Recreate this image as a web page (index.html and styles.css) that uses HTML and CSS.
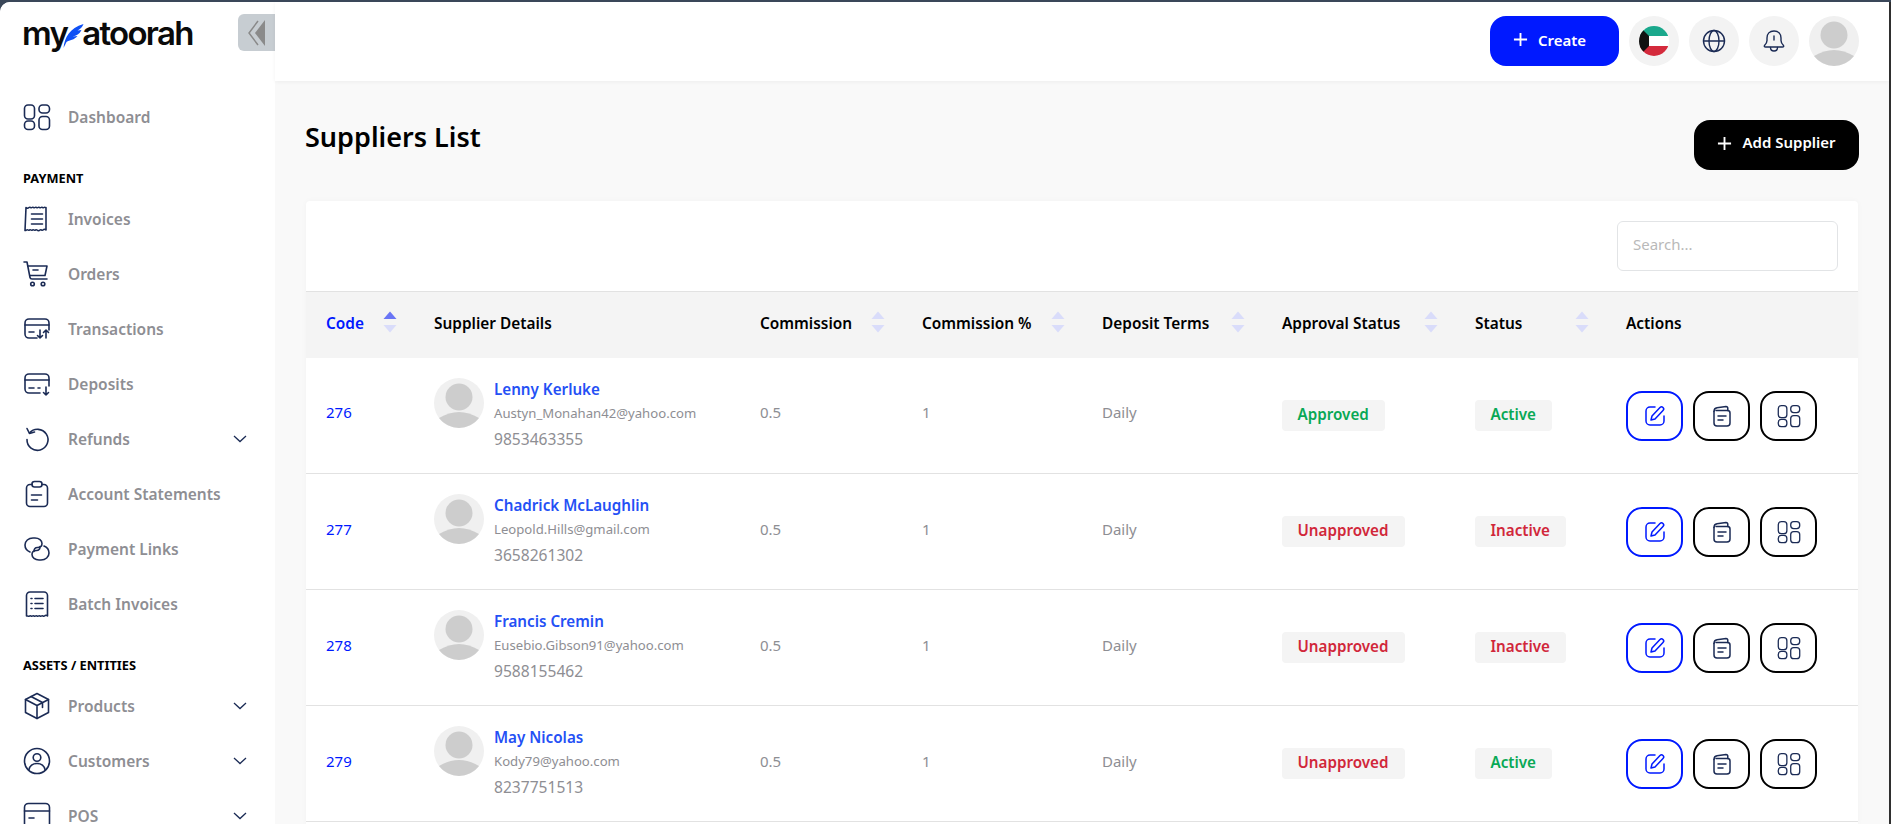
FILE: index.html
```html
<!DOCTYPE html>
<html lang="en">
<head>
<meta charset="utf-8">
<title>Suppliers List</title>
<link rel="stylesheet" href="styles.css">
</head>
<body>
<svg class="defs" width="0" height="0" aria-hidden="true">
  <symbol id="i-grid" viewBox="0 0 28 28"><rect x="1.500" y="2" width="10" height="14" rx="3.500"/><rect x="16" y="2" width="10.500" height="8" rx="3.500"/><rect x="1.500" y="18" width="10" height="8.500" rx="3.500"/><rect x="16" y="13.500" width="10.500" height="13" rx="3.500"/></symbol>
  <symbol id="i-chev" viewBox="0 0 14 8"><path d="M1 1l6 5.500L13 1"/></symbol>
  <symbol id="i-plus" viewBox="0 0 16 16"><path d="M8 1v14M1 8h14"/></symbol>
  <symbol id="i-sort" viewBox="0 0 14 22"><path class="up" d="M7 .5l6.500 7.500H.5z"/><path class="dn" d="M.5 14h13L7 21.500z"/></symbol>
  <symbol id="i-avatar" viewBox="0 0 50 50"><circle cx="25" cy="25" r="25" fill="#f0f0f0"/><circle cx="25" cy="19" r="13.500" fill="#cdcdcd"/><path d="M5 40Q25 28 45 40A25 25 0 0 1 5 40z" fill="#cdcdcd"/></symbol>
  <symbol id="i-edit" viewBox="0 0 24 24"><path d="M12 3H7a4 4 0 0 0-4 4v10a4 4 0 0 0 4 4h10a4 4 0 0 0 4-4v-5"/><path d="M8 16l1-4 8-8.500a2 2 0 0 1 3 3l-8 8.500z"/></symbol>
  <symbol id="i-note" viewBox="0 0 24 24"><path d="M4 7.500V19a3 3 0 0 0 3 3h10a3 3 0 0 0 3-3V9a2.500 2.500 0 0 0-2.500-2.500H6"/><path d="M4 7.500C4 5 5.500 4 7 3.800L16 2.500c1.200 0 1.800.8 1.800 2v2"/><path d="M8 12h8M8 16h5"/></symbol>
</svg>

<div class="app">
  <aside class="sidebar">
    <div class="brand">
      <div class="logo"><span>my</span><svg class="quill" viewBox="0 0 20 24"><path d="M0 24C1 14 6 4 20 0c-1 3-3 5-6 6.500L18 6c-2 4-5 6-9 6.500l5-.5c-3 4-8 4-11 6-1 2-2 4-3 6z"/></svg><span>atoorah</span></div>
      <button class="collapse" type="button" aria-label="Collapse"><svg viewBox="0 0 20 28"><path class="cline" d="M11 2L2 14l9 12"/><path class="cfill" d="M18 1v26L8 14z"/></svg></button>
    </div>
    <nav class="nav">
      <a class="item"><svg class="ico"><use href="#i-grid"/></svg><span>Dashboard</span></a>
      <h4 class="section">PAYMENT</h4>
      <a class="item"><svg class="ico" viewBox="0 0 28 28"><path d="M3 2.500c1 1 2 1 3 0s2 1 3 0 2 1 3 0 2 1 3 0 2 1 3 0 2 1 3 0 2 1 2 0V25c-1-1-2-1-3 0s-2-1-3 0-2 1-3 0-2 1-3 0-2 1-3 0-2 1-3 0-2 1-3 .5z"/><path d="M8.500 9h11M8.500 14h11M8.500 19h11"/></svg><span>Invoices</span></a>
      <a class="item"><svg class="ico" viewBox="0 0 28 28"><path d="M1 2h3l3 15.500c.2 1 .8 1.500 2 1.500h15"/><path d="M5 6h19l-2 9.500H7"/><path d="M10 10h5"/><circle cx="9.500" cy="24" r="1.800"/><circle cx="20" cy="24" r="1.800"/></svg><span>Orders</span></a>
      <a class="item"><svg class="ico" viewBox="0 0 28 28"><path d="M14 23H6a4 4 0 0 1-4-4V8a4 4 0 0 1 4-4h16a4 4 0 0 1 4 4v7"/><path d="M2 10h24M6 17h5"/><path d="M17 15v8m-2.500-2.500L17 23l2.500-2.500M23 23v-8m-2.500 2.500L23 15l2.500 2.500"/></svg><span>Transactions</span></a>
      <a class="item"><svg class="ico" viewBox="0 0 28 28"><path d="M17 23H6a4 4 0 0 1-4-4V8a4 4 0 0 1 4-4h16a4 4 0 0 1 4 4v8"/><path d="M2 10h24M6 18h5M15 18h2"/><path d="M23 17v8m-2.500-2.500L23 25l2.500-2.500"/></svg><span>Deposits</span></a>
      <a class="item"><svg class="ico" viewBox="0 0 28 28"><path d="M6.500 8A10.500 10.500 0 1 1 4 14.500"/><path d="M4 3.500l2.500 5 5-1.500"/></svg><span>Refunds</span><svg class="chev"><use href="#i-chev"/></svg></a>
      <a class="item"><svg class="ico" viewBox="0 0 28 28"><path d="M9 4.500H7a3.500 3.500 0 0 0-3.500 3.500v15A3.500 3.500 0 0 0 7 26.500h14a3.500 3.500 0 0 0 3.500-3.500V8A3.500 3.500 0 0 0 21 4.500h-2"/><rect x="9" y="1.500" width="10" height="5.500" rx="2.500"/><path d="M8.500 15h10M8.500 20h6"/></svg><span>Account Statements</span></a>
      <a class="item"><svg class="ico" viewBox="0 0 28 28"><path d="M7 17C3.500 15.500 2 13 2 10c0-4 3.500-7 8-7h2c4 0 7 2.500 7 5.500 0 2.500-2 4-4.500 4S11 14 11 16.500"/><path d="M21 11c3.500 1.500 5 4 5 7 0 4-3.500 7-8 7h-2c-4 0-7-2.500-7-5.500 0-2.500 2-4 4.500-4s3.500-1.500 3.500-4"/></svg><span>Payment Links</span></a>
      <a class="item"><svg class="ico" viewBox="0 0 28 28"><path d="M3.500 5.500A3.500 3.500 0 0 1 7 2h14a3.500 3.500 0 0 1 3.500 3.500V26c-1-1-2-1-3 0s-2-1-3 0-2-1-3 0-2-1-3 0-2-1-3 0-2-1-3 0-2-.5-3 0z"/><path d="M12 8.500h8M12 13.500h8M12 18.500h8M8 8.500h1M8 13.500h1M8 18.500h1"/></svg><span>Batch Invoices</span></a>
      <h4 class="section">ASSETS / ENTITIES</h4>
      <a class="item"><svg class="ico" viewBox="0 0 28 28"><path d="M14 1.500L25.500 7.500V20.500L14 26.500 2.500 20.500V7.500z"/><path d="M2.500 7.500L14 13.500 25.500 7.500M14 13.500v13M8 4.500l11.500 6v5"/></svg><span>Products</span><svg class="chev"><use href="#i-chev"/></svg></a>
      <a class="item"><svg class="ico" viewBox="0 0 28 28"><circle cx="14" cy="14" r="12.500"/><circle cx="14" cy="10.500" r="3.800"/><path d="M5.800 23c1-4.500 4-6.500 8.200-6.500s7.200 2 8.200 6.500"/></svg><span>Customers</span><svg class="chev"><use href="#i-chev"/></svg></a>
      <a class="item"><svg class="ico" viewBox="0 0 28 28"><rect x="1.500" y="1.500" width="25" height="24" rx="4"/><path d="M1.500 9h25M6 16h5"/></svg><span>POS</span><svg class="chev"><use href="#i-chev"/></svg></a>
    </nav>
  </aside>

  <div class="main">
    <header class="topbar">
      <button class="create" type="button"><svg class="plus"><use href="#i-plus"/></svg>Create</button>
      <span class="round"><svg class="flag" viewBox="0 0 30 30"><defs><clipPath id="fc"><circle cx="15" cy="15" r="15"/></clipPath></defs><g clip-path="url(#fc)"><rect width="30" height="10" fill="#1aa88c"/><rect y="10" width="30" height="10" fill="#fff"/><rect y="20" width="30" height="10" fill="#d42a3c"/><path d="M0 0l10 10v10L0 30z" fill="#111"/></g></svg></span>
      <span class="round"><svg class="tico" viewBox="0 0 24 24"><circle cx="12" cy="12" r="10.500"/><ellipse cx="12" cy="12" rx="5" ry="10.500"/><path d="M1.500 12h21"/></svg></span>
      <span class="round"><svg class="tico" viewBox="0 0 24 24"><path d="M12 2c-4.500 0-7 3-7 7v2.500c0 2-1 3.500-2.500 5-.5.8 0 1.500 1 1.500h17c1 0 1.500-.7 1-1.500-1.500-1.500-2.500-3-2.500-5V9c0-4-2.500-7-7-7z"/><path d="M8.500 18.500c0 2 1.500 3.500 3.500 3.500s3.500-1.500 3.500-3.500M12 7v4"/></svg></span>
      <svg class="avatar"><use href="#i-avatar"/></svg>
    </header>

    <main class="content">
      <div class="head">
        <h1>Suppliers List</h1>
        <button class="add" type="button"><svg class="plus"><use href="#i-plus"/></svg><span>Add Supplier</span></button>
      </div>
      <section class="card">
        <div class="tools"><input class="search" type="text" placeholder="Search..."></div>
        <table>
          <colgroup><col class="c1"><col class="c2"><col class="c3"><col class="c4"><col class="c5"><col class="c6"><col class="c7"><col class="c8"></colgroup>
          <thead>
            <tr>
              <th class="on"><div>Code<svg class="sort active"><use href="#i-sort"/></svg></div></th>
              <th>Supplier Details</th>
              <th><div>Commission<svg class="sort"><use href="#i-sort"/></svg></div></th>
              <th><div>Commission %<svg class="sort"><use href="#i-sort"/></svg></div></th>
              <th><div>Deposit Terms<svg class="sort"><use href="#i-sort"/></svg></div></th>
              <th><div>Approval Status<svg class="sort"><use href="#i-sort"/></svg></div></th>
              <th><div>Status<svg class="sort"><use href="#i-sort"/></svg></div></th>
              <th>Actions</th>
            </tr>
          </thead>
          <tbody>
            <tr>
              <td class="code">276</td>
              <td class="top"><div class="who"><svg class="avatar"><use href="#i-avatar"/></svg><div class="info"><a class="name">Lenny Kerluke</a><div class="mail">Austyn_Monahan42@yahoo.com</div><div class="tel">9853463355</div></div></div></td>
              <td>0.5</td><td>1</td><td>Daily</td>
              <td class="mid"><span class="tag ok">Approved</span></td>
              <td class="mid"><span class="tag ok">Active</span></td>
              <td class="mid"><div class="acts"><button class="act blue" type="button"><svg><use href="#i-edit"/></svg></button><button class="act" type="button"><svg><use href="#i-note"/></svg></button><button class="act" type="button"><svg class="g"><use href="#i-grid"/></svg></button></div></td>
            </tr>
            <tr>
              <td class="code">277</td>
              <td class="top"><div class="who"><svg class="avatar"><use href="#i-avatar"/></svg><div class="info"><a class="name">Chadrick McLaughlin</a><div class="mail">Leopold.Hills@gmail.com</div><div class="tel">3658261302</div></div></div></td>
              <td>0.5</td><td>1</td><td>Daily</td>
              <td class="mid"><span class="tag bad">Unapproved</span></td>
              <td class="mid"><span class="tag bad">Inactive</span></td>
              <td class="mid"><div class="acts"><button class="act blue" type="button"><svg><use href="#i-edit"/></svg></button><button class="act" type="button"><svg><use href="#i-note"/></svg></button><button class="act" type="button"><svg class="g"><use href="#i-grid"/></svg></button></div></td>
            </tr>
            <tr>
              <td class="code">278</td>
              <td class="top"><div class="who"><svg class="avatar"><use href="#i-avatar"/></svg><div class="info"><a class="name">Francis Cremin</a><div class="mail">Eusebio.Gibson91@yahoo.com</div><div class="tel">9588155462</div></div></div></td>
              <td>0.5</td><td>1</td><td>Daily</td>
              <td class="mid"><span class="tag bad">Unapproved</span></td>
              <td class="mid"><span class="tag bad">Inactive</span></td>
              <td class="mid"><div class="acts"><button class="act blue" type="button"><svg><use href="#i-edit"/></svg></button><button class="act" type="button"><svg><use href="#i-note"/></svg></button><button class="act" type="button"><svg class="g"><use href="#i-grid"/></svg></button></div></td>
            </tr>
            <tr>
              <td class="code">279</td>
              <td class="top"><div class="who"><svg class="avatar"><use href="#i-avatar"/></svg><div class="info"><a class="name">May Nicolas</a><div class="mail">Kody79@yahoo.com</div><div class="tel">8237751513</div></div></div></td>
              <td>0.5</td><td>1</td><td>Daily</td>
              <td class="mid"><span class="tag bad">Unapproved</span></td>
              <td class="mid"><span class="tag ok">Active</span></td>
              <td class="mid"><div class="acts"><button class="act blue" type="button"><svg><use href="#i-edit"/></svg></button><button class="act" type="button"><svg><use href="#i-note"/></svg></button><button class="act" type="button"><svg class="g"><use href="#i-grid"/></svg></button></div></td>
            </tr>
          </tbody>
        </table>
      </section>
    </main>
  </div>
</div>
</body>
</html>
```
FILE: styles.css
```css
* { box-sizing: border-box; }
html, body { margin: 0; height: 100%; overflow: hidden; }
body { background: #3a4759; font-family: "Noto Sans", sans-serif; color: #000; padding-top: 2px; }
.defs { position: absolute; }
.app { display: flex; height: 822px; background: #f9f9f9; overflow: hidden; border-radius: 10px 0 0 0; border-right: 2px solid #2f2f2f; }

.sidebar { width: 275px; flex: none; background: #fff; overflow: hidden; }
.brand { display: flex; justify-content: space-between; align-items: flex-start; padding: 12px 0 0 23px; height: 88px; }
.logo { display: flex; align-items: center; font-family: "Inter", sans-serif; font-weight: 600; font-size: 33px; letter-spacing: -1.7px; line-height: 38px; color: #0a0a0a; margin-left: -1px; }
.quill { width: 21px; height: 24px; fill: #0f50f5; margin: 5px -2px 0 -4px; flex: none; }
.collapse { width: 37px; height: 37px; border: 0; padding: 0; background: #c7cdd2; border-radius: 6px 0 0 6px; display: flex; align-items: center; justify-content: center; }
.collapse svg { width: 20px; height: 28px; }
.cline { fill: none; stroke: #8a8a8a; stroke-width: 1.500; }
.cfill { fill: #8a8a8a; }

.nav { padding: 0 0 0 23px; }
.item { display: flex; align-items: center; height: 55px; padding-bottom: 1px; font-size: 15.500px; font-weight: 600; color: #8e8e93; }
.ico { width: 28px; height: 28px; margin-right: 17px; flex: none; fill: none; stroke: #1b2b55; stroke-width: 1.600; stroke-linecap: round; stroke-linejoin: round; }
.chev { width: 14px; height: 8px; margin-left: auto; margin-right: 28px; fill: none; stroke: #1b2b55; stroke-width: 1.300; }
.section { margin: 0; font-size: 12.800px; font-weight: 700; line-height: 16px; color: #000; padding-top: 25px; height: 47px; }

.main { flex: 1; min-width: 0; display: flex; flex-direction: column; }
.topbar { height: 79px; flex: none; background: #fff; display: flex; align-items: flex-start; justify-content: flex-end; gap: 10px; padding: 14px 30px 0 0; box-shadow: 0 1px 4px rgba(0,0,0,.05); }
.plus { width: 15px; height: 15px; fill: none; stroke: currentColor; stroke-width: 2; flex: none; }
.create { width: 129px; height: 50px; border: 0; border-radius: 16px; background: #0019ff; color: #fff; font: 600 15px "Noto Sans", sans-serif; display: flex; align-items: center; justify-content: center; gap: 10px; padding: 0 10px 3px 0; }
.round { width: 50px; height: 50px; border-radius: 50%; background: #f3f3f3; display: flex; align-items: center; justify-content: center; }
.flag { width: 30px; height: 30px; }
.tico { width: 24px; height: 24px; fill: none; stroke: #1b2b55; stroke-width: 1.400; stroke-linecap: round; stroke-linejoin: round; }
.avatar { width: 50px; height: 50px; flex: none; }

.content { flex: 1; min-height: 0; padding: 39px 30px 0 30px; display: flex; flex-direction: column; }
.head { display: flex; justify-content: space-between; align-items: flex-start; height: 81px; flex: none; }
h1 { margin: -1px 0 0; font-size: 27px; font-weight: 600; line-height: 36px; }
.add { width: 165px; height: 50px; border: 0; padding: 0 0 4px; border-radius: 16px; background: #000; color: #fff; font: 600 15px "Noto Sans", sans-serif; display: flex; align-items: center; justify-content: center; gap: 10px; }
.add span { margin-top: -3px; }
.card { flex: 1; margin: 0 1px; background: #fff; border-radius: 4px 4px 0 0; box-shadow: 0 0 6px rgba(0,0,0,.03); overflow: hidden; }
.tools { height: 90px; display: flex; justify-content: flex-end; padding: 20px 20px 0 0; }
.search { width: 221px; height: 50px; border: 1px solid #e2e4e6; border-radius: 6px; padding: 0 15px 5px; font: 400 15px "Noto Sans", sans-serif; background: #fff; }
.search::placeholder { color: #b9b9b9; }

table { width: 100%; border-collapse: collapse; table-layout: fixed; }
.c1 { width: 108px; } .c2 { width: 326px; } .c3 { width: 162px; } .c4 { width: 180px; }
.c5 { width: 180px; } .c6 { width: 193px; } .c7 { width: 151px; } .c8 { width: 252px; }
th { height: 66px; background: #f4f4f4; border-top: 1px solid #e2e2e2; text-align: left; padding: 0 0 3px 20px; font-size: 15.400px; font-weight: 600; color: #000; }
th div { display: flex; justify-content: space-between; align-items: center; padding-right: 17px; }
th.on { color: #0019ff; }
.sort { width: 14px; height: 22px; margin-top: -3px; --up: #d9dcfa; }
.sort.active { --up: #6a75f5; }
.up { fill: var(--up); }
.dn { fill: #d9dcfa; }
td { height: 116px; padding: 0 0 6px 20px; border-bottom: 1px solid #e2e2e2; font-size: 15px; color: #8e8e93; vertical-align: middle; }
td.mid { padding-bottom: 0; }
td.top { vertical-align: top; padding: 20px 0 0 20px; }
.code { color: #0019ff; }
.who { display: flex; gap: 10px; align-items: flex-start; }
.info { margin-top: -1px; }
.name { display: block; color: #2450f5; font-weight: 600; font-size: 15.200px; line-height: 24px; }
.mail { font-size: 13.150px; line-height: 25px; color: #8e8e93; }
.tel { font-size: 15.600px; line-height: 26px; color: #8e8e93; }
.tag { display: inline-block; height: 31px; line-height: 28px; padding: 0 16px 0 15.500px; border-radius: 4px; background: #f4f4f4; font-weight: 600; font-size: 15.200px; }
.ok { color: #08a855; }
.bad { color: #d1273a; }
.acts { display: flex; gap: 10px; margin-top: 1px; }
.act { width: 57px; height: 50px; padding: 0; background: #fff; border: 2px solid #000; border-radius: 16px; display: flex; align-items: center; justify-content: center; color: #1b2b55; }
.act.blue { border-color: #0019ff; color: #0019ff; }
.act svg { width: 24px; height: 24px; fill: none; stroke: currentColor; stroke-width: 1.500; stroke-linecap: round; stroke-linejoin: round; }
```
